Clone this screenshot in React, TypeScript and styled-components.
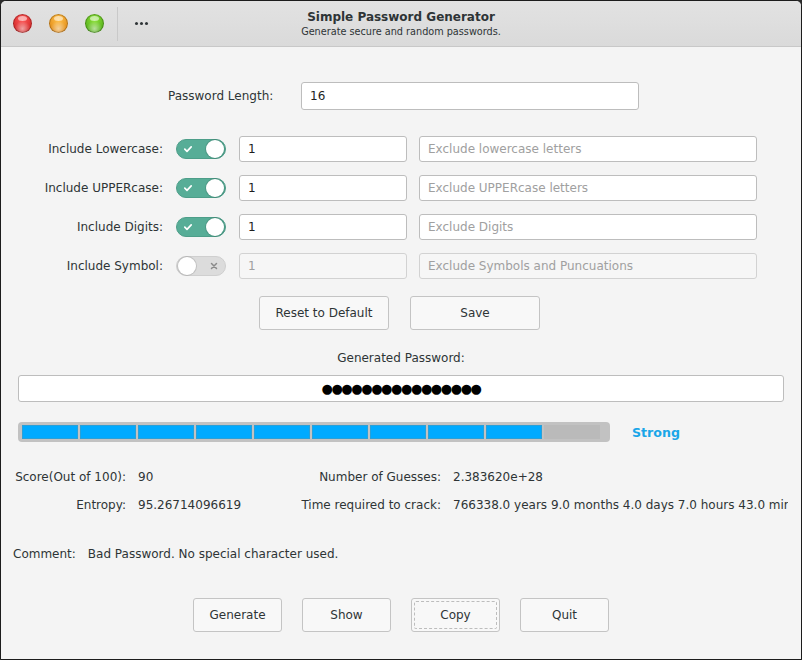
import React from "react";
import styled, { createGlobalStyle } from "styled-components";

const Global = createGlobalStyle`
  html, body { margin: 0; padding: 0; background: #2b2b2b; }
  body { font-family: "DejaVu Sans", "Noto Sans", sans-serif; font-size: 12px; color: #2e3436; }
  * { box-sizing: border-box; }
`;

const Window = styled.div`
  width: 802px;
  height: 660px;
  border: 1px solid #1c1c1c;
  border-radius: 6px 6px 0 0;
  background: #f4f4f4;
  overflow: hidden;
  display: flex;
  flex-direction: column;
`;

const TitleBar = styled.div`
  height: 46px;
  flex: none;
  background: linear-gradient(#e2e2e2, #dadada);
  border-bottom: 1px solid #c8c8c8;
  display: grid;
  grid-template-columns: 1fr auto 1fr;
  align-items: center;
`;

const Controls = styled.div`
  display: flex;
  align-items: center;
  height: 100%;
  padding-left: 12px;
`;

const Light = styled.div<{ $c: string; $d: string }>`
  width: 19px;
  height: 19px;
  border-radius: 50%;
  margin-right: 17px;
  background: radial-gradient(circle at 50% 78%, rgba(255,255,255,0.55) 0, rgba(255,255,255,0) 45%),
    radial-gradient(circle at 50% 30%, ${(p) => p.$c} 0, ${(p) => p.$d} 100%);
  box-shadow: inset 0 0 0 1px rgba(0,0,0,0.25);
  position: relative;
  &::after {
    content: "";
    position: absolute;
    left: 5px;
    top: 2px;
    width: 9px;
    height: 5px;
    border-radius: 50%;
    background: rgba(255,255,255,0.55);
  }
`;

const Sep = styled.div`
  width: 1px;
  height: 34px;
  background: #c9c9c9;
  margin-left: -4px;
  margin-right: 17px;
`;

const Dots = styled.div`
  display: flex;
  gap: 2px;
`;

const Dot = styled.span`
  width: 3px;
  height: 3px;
  border-radius: 50%;
  background: #2e3436;
`;

const TitleBox = styled.div`
  display: flex;
  flex-direction: column;
  align-items: center;
  padding-top: 1px;
`;

const Title = styled.div`
  font-weight: bold;
  font-size: 12px;
  line-height: 15px;
  color: #2e3436;
`;

const Subtitle = styled.div`
  font-size: 9.7px;
  line-height: 13px;
  color: #2e3436;
`;

const Body = styled.div`
  flex: 1;
  display: flex;
  flex-direction: column;
  padding: 35px 11px 0 11px;
`;

const LengthRow = styled.div`
  display: flex;
  align-items: center;
  height: 28px;
  padding-left: 156px;
`;

const LengthLabel = styled.div`
  width: 133px;
`;

const Input = styled.div<{ $w: number; $h?: number; $disabled?: boolean; $placeholder?: boolean }>`
  width: ${(p) => p.$w}px;
  height: ${(p) => p.$h ?? 26}px;
  border: 1px solid ${(p) => (p.$disabled ? "#d2d2d2" : "#bdbdbd")};
  border-radius: 3px;
  background: ${(p) => (p.$disabled ? "#f6f6f6" : "#ffffff")};
  color: ${(p) => (p.$disabled || p.$placeholder ? "#a0a0a0" : "#1e1e1e")};
  display: flex;
  align-items: center;
  padding-left: 8px;
  flex: none;
  white-space: nowrap;
`;

const Options = styled.div`
  margin-top: 26px;
  display: flex;
  flex-direction: column;
  gap: 13px;
`;

const OptRow = styled.div`
  display: flex;
  align-items: center;
  height: 26px;
`;

const OptLabel = styled.div`
  width: 151px;
  text-align: right;
`;

const Switch = styled.div<{ $on: boolean }>`
  margin-left: 13px;
  margin-right: 13px;
  width: 50px;
  height: 20px;
  border-radius: 10px;
  flex: none;
  background: ${(p) => (p.$on ? "#57ad97" : "#dcdcdc")};
  border: 1px solid ${(p) => (p.$on ? "#4d9e89" : "#cfcfcf")};
  display: flex;
  align-items: center;
  justify-content: space-between;
  flex-direction: ${(p) => (p.$on ? "row" : "row-reverse")};
  padding: 0 1px 0 ${(p) => (p.$on ? "6px" : "1px")};
  ${(p) => (!p.$on ? "padding-right: 7px;" : "")}
`;

const Knob = styled.div`
  width: 18px;
  height: 18px;
  border-radius: 50%;
  background: #ffffff;
  box-shadow: 0 0 0 1px rgba(0, 0, 0, 0.12);
`;

const ButtonRow = styled.div<{ $gap: number; $top: number; $shift?: number }>`
  display: flex;
  justify-content: center;
  gap: ${(p) => p.$gap}px;
  margin-top: ${(p) => p.$top}px;
  padding-right: ${(p) => p.$shift ?? 0}px;
`;

const Button = styled.div<{ $w: number; $focus?: boolean }>`
  width: ${(p) => p.$w}px;
  height: 34px;
  border: 1px solid #c4c4c4;
  border-radius: 3px;
  background: #f8f8f8;
  display: flex;
  align-items: center;
  justify-content: center;
  color: #2e3436;
  position: relative;
  ${(p) =>
    p.$focus
      ? `&::after { content: ""; position: absolute; inset: 2px; border: 1px dashed #bdbdbd; border-radius: 2px; }`
      : ""}
`;

const GenLabel = styled.div`
  text-align: center;
  margin-top: 20px;
  height: 16px;
  line-height: 16px;
`;

const PwField = styled.div`
  margin-top: 9px;
  margin-left: 6px;
  width: 766px;
  height: 27px;
  border: 1px solid #bdbdbd;
  border-radius: 3px;
  background: #fff;
  display: flex;
  align-items: center;
  justify-content: center;
  font-size: 13px;
  letter-spacing: -1.4px;
  color: #000;
`;

const StrengthRow = styled.div`
  display: flex;
  align-items: center;
  margin-top: 20px;
  margin-left: 6px;
`;

const Bar = styled.div`
  width: 592px;
  height: 20px;
  border-radius: 4px;
  background: #c2c2c2;
  display: flex;
  align-items: center;
  gap: 2px;
  padding: 0 9px 0 4px;
`;

const Segment = styled.div<{ $on: boolean }>`
  width: 56px;
  height: 14px;
  background: ${(p) => (p.$on ? "#00aaff" : "#bababa")};
  box-shadow: ${(p) => (p.$on ? "inset 0 0 0 1px #2aa0d8" : "none")};
`;

const Strong = styled.div`
  margin-left: 22px;
  font-weight: bold;
  font-size: 12.6px;
  color: #1aa6e8;
`;

const Stats = styled.div`
  display: grid;
  grid-template-columns: 113px 150px 141px 335px;
  column-gap: 12px;
  row-gap: 12px;
  margin-top: 27px;
  margin-left: 1px;
  white-space: nowrap;
`;

const StatLabel = styled.div`
  text-align: right;
  line-height: 16px;
`;

const StatValue = styled.div`
  line-height: 16px;
  overflow: hidden;
`;

const Comment = styled.div`
  display: flex;
  gap: 12px;
  margin-top: 33px;
  margin-left: 1px;
  line-height: 16px;
`;

const Check = () => (
  <svg width="10" height="10" viewBox="0 0 10 10">
    <path d="M1.8 5.2 L4 7.3 L8.2 2.8" stroke="#fff" strokeWidth="1.7" fill="none" strokeLinecap="round" strokeLinejoin="round" />
  </svg>
);

const Cross = () => (
  <svg width="8" height="8" viewBox="0 0 8 8">
    <path d="M1.5 1.5 L6.5 6.5 M6.5 1.5 L1.5 6.5" stroke="#8a8a8a" strokeWidth="1.5" strokeLinecap="round" />
  </svg>
);

const options = [
  { label: "Include Lowercase:", on: true, ph: "Exclude lowercase letters" },
  { label: "Include UPPERcase:", on: true, ph: "Exclude UPPERcase letters" },
  { label: "Include Digits:", on: true, ph: "Exclude Digits" },
  { label: "Include Symbol:", on: false, ph: "Exclude Symbols and Puncuations" },
];

export default function App() {
  return (
    <>
      <Global />
      <Window>
        <TitleBar>
          <Controls>
            <Light $c="#ff5a5a" $d="#c11414" />
            <Light $c="#ffc04a" $d="#d77a06" />
            <Light $c="#8fe33c" $d="#3d9a0c" />
            <Sep />
            <Dots>
              <Dot />
              <Dot />
              <Dot />
            </Dots>
          </Controls>
          <TitleBox>
            <Title>Simple Password Generator</Title>
            <Subtitle>Generate secure and random passwords.</Subtitle>
          </TitleBox>
          <div />
        </TitleBar>
        <Body>
          <LengthRow>
            <LengthLabel>Password Length:</LengthLabel>
            <Input $w={338} $h={28}>16</Input>
          </LengthRow>
          <Options>
            {options.map((o) => (
              <OptRow key={o.label}>
                <OptLabel>{o.label}</OptLabel>
                <Switch $on={o.on}>
                  {o.on ? <Check /> : <Cross />}
                  <Knob />
                </Switch>
                <Input $w={168} $disabled={!o.on}>1</Input>
                <Input $w={338} $disabled={!o.on} $placeholder style={{ marginLeft: 12 }}>
                  {o.ph}
                </Input>
              </OptRow>
            ))}
          </Options>
          <ButtonRow $gap={21} $top={17} $shift={3}>
            <Button $w={130}>Reset to Default</Button>
            <Button $w={130}>Save</Button>
          </ButtonRow>
          <GenLabel>Generated Password:</GenLabel>
          <PwField>●●●●●●●●●●●●●●●●</PwField>
          <StrengthRow>
            <Bar>
              {Array.from({ length: 10 }).map((_, i) => (
                <Segment key={i} $on={i < 9} />
              ))}
            </Bar>
            <Strong>Strong</Strong>
          </StrengthRow>
          <Stats>
            <StatLabel>Score(Out of 100):</StatLabel>
            <StatValue>90</StatValue>
            <StatLabel>Number of Guesses:</StatLabel>
            <StatValue>2.383620e+28</StatValue>
            <StatLabel>Entropy:</StatLabel>
            <StatValue>95.26714096619</StatValue>
            <StatLabel>Time required to crack:</StatLabel>
            <StatValue>766338.0 years 9.0 months 4.0 days 7.0 hours 43.0 minutes</StatValue>
          </Stats>
          <Comment>
            <span>Comment:</span>
            <span>Bad Password. No special character used.</span>
          </Comment>
          <ButtonRow $gap={20} $top={36}>
            <Button $w={89}>Generate</Button>
            <Button $w={89}>Show</Button>
            <Button $w={89} $focus>Copy</Button>
            <Button $w={89}>Quit</Button>
          </ButtonRow>
        </Body>
      </Window>
    </>
  );
}
